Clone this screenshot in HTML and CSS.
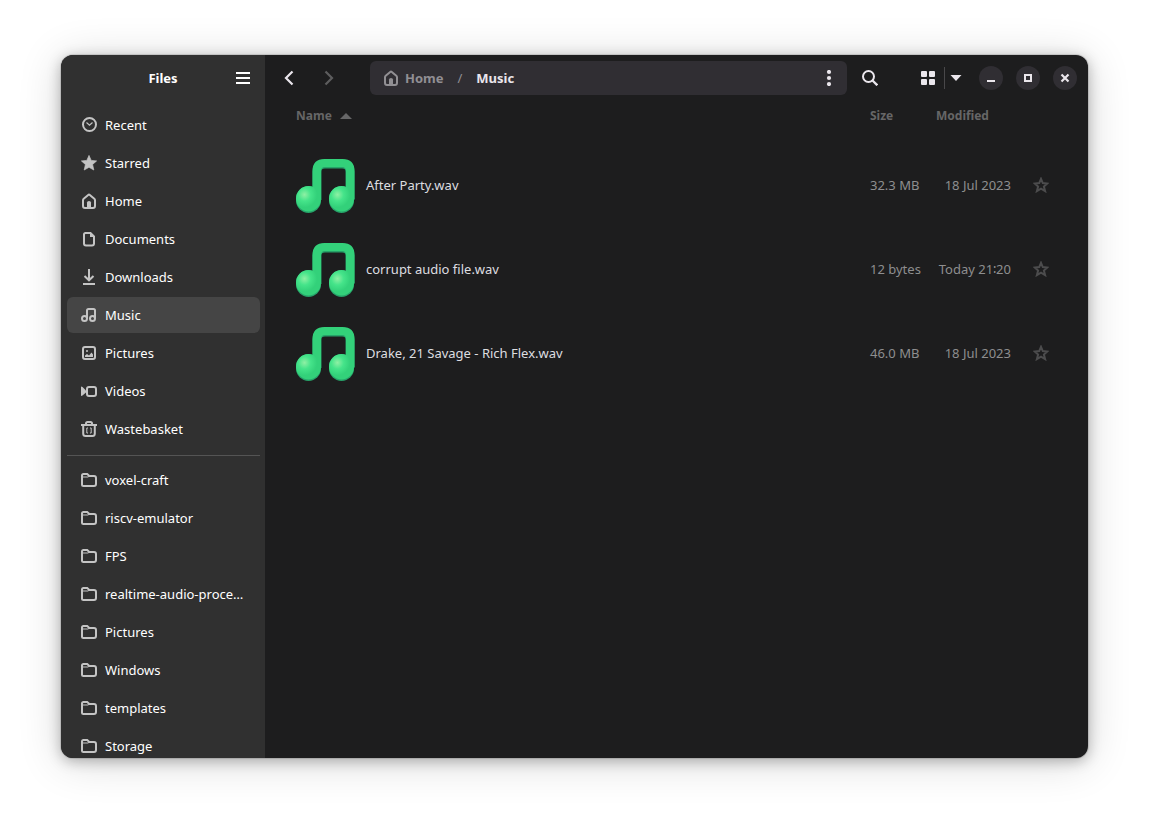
FILE: index.html
```html
<!DOCTYPE html>
<html lang="en">
<head>
<meta charset="utf-8">
<title>Files</title>
<link rel="stylesheet" href="styles.css">
</head>
<body>
<svg class="defs" aria-hidden="true">
  <symbol id="recent" viewBox="0 0 16 16"><circle cx="8.500" cy="7.500" r="6.500" fill="none" stroke="currentColor" stroke-width="2"/><path d="M5.500 5.500 8.500 8.200 11.500 5.500" fill="none" stroke="currentColor" stroke-width="1.200"/></symbol>
  <symbol id="starred" viewBox="0 0 16 16"><path d="M8 .4 10.200 5.400 15.600 5.900 11.600 9.500 12.800 15 8 12.300 3.200 15 4.400 9.500 .4 5.900 5.800 5.400Z" fill="currentColor" stroke="currentColor" stroke-width=".7" stroke-linejoin="round"/></symbol>
  <symbol id="home" viewBox="0 0 16 16"><path d="M2 7.200Q2 6.300 2.700 5.700L7.200 1.900Q8 1.200 8.800 1.900L13.300 5.700Q14 6.300 14 7.200V13Q14 15 12 15H4Q2 15 2 13Z" fill="none" stroke="currentColor" stroke-width="2"/><path d="M6 15V9.500Q6 8 8 8T10 9.500V15Z" fill="currentColor"/></symbol>
  <symbol id="document" viewBox="0 0 16 16"><path d="M4.500 2H9.500L13 5.500V12.500Q13 14.500 11 14.500H5Q3 14.500 3 12.500V3.500Q3 2 4.500 2Z" fill="none" stroke="currentColor" stroke-width="2"/><path d="M9 1.500V6H13.500Z" fill="currentColor"/></symbol>
  <symbol id="download" viewBox="0 0 16 16"><path d="M8 0V11M3.500 7 8 11.300 12.500 7M2 15H14" fill="none" stroke="currentColor" stroke-width="2"/></symbol>
  <symbol id="music" viewBox="0 0 16 16"><g fill="none" stroke="currentColor" stroke-width="2"><circle cx="3.500" cy="11.500" r="2.500"/><circle cx="11.500" cy="11.500" r="2.500"/><path d="M6 11.500V3.500Q6 2 7.500 2H12.500Q14 2 14 3.500V11.500"/></g></symbol>
  <symbol id="picture" viewBox="0 0 16 16"><rect x="2" y="2" width="12" height="12" rx="2" fill="none" stroke="currentColor" stroke-width="2"/><path d="M4 12V10.500L6 9 8 10.500 10.500 7.500 12 9.500V12Z" fill="currentColor"/><circle cx="6" cy="6" r="1" fill="currentColor"/></symbol>
  <symbol id="video" viewBox="0 0 16 16"><rect x="6" y="4" width="9" height="9" rx="2" fill="none" stroke="currentColor" stroke-width="2"/><path d="M0 3.500V13L1.500 12.500 5 9.500V7.500L1.500 4Z" fill="currentColor"/></symbol>
  <symbol id="trash" viewBox="0 0 16 16"><path d="M0 4H16M5 4V2.500Q5 1 6.500 1H9.500Q11 1 11 2.500V4M2.200 5V12.500Q2.200 15 4.500 15H11.500Q13.800 15 13.800 12.500V5" fill="none" stroke="currentColor" stroke-width="2"/><path d="M7 7H5.800V12H7M9 7H10.200V12H9" fill="none" stroke="currentColor" stroke-width="1"/></symbol>
  <symbol id="folder" viewBox="0 0 16 16"><path d="M1 12.500V3.500Q1 2 2.500 2H6.200L8.300 4H13Q15 4 15 6V12Q15 14 13 14H2.500Q1 14 1 12.500Z" fill="none" stroke="currentColor" stroke-width="2"/><path d="M1.500 5H7L9 3.700" fill="none" stroke="currentColor" stroke-width="1"/></symbol>
  <symbol id="star" viewBox="0 0 16 16"><path d="M8 1.800 9.800 6.100 14.300 6.500 10.900 9.500 12.100 14.100 8 11.600 3.900 14.100 5.100 9.500 1.700 6.500 6.200 6.100Z" fill="none" stroke="currentColor" stroke-width="2"/></symbol>
  <symbol id="audio" viewBox="0 1 64 64">
    <path d="M24 48V20Q24 12 32 12H49Q57 12 57 20V48" fill="none" stroke="#26a269" stroke-width="9"/>
    <rect x="3" y="34" width="25" height="27" rx="12.500" fill="#26a269"/><rect x="36" y="34" width="25" height="27" rx="12.500" fill="#26a269"/>
    <path d="M19.500 47V19Q19.500 7 31.500 7H49.500Q61.500 7 61.500 19V47H53V19Q53 15 49 15H32Q28 15 28 19V47Z" fill="#33d17a"/>
    <rect x="3" y="34" width="25" height="25.500" rx="12.500" fill="url(#shine)"/><rect x="36" y="34" width="25" height="25.500" rx="12.500" fill="url(#shine)"/>
  </symbol>
  <radialGradient id="shine" cx=".34" cy=".34" r=".5"><stop offset="0" stop-color="#8ff0a4"/><stop offset=".5" stop-color="#45e48a"/><stop offset="1" stop-color="#33d17a"/></radialGradient>
</svg>

<div class="window">
  <aside class="sidebar">
    <header class="sidebar-header">
      <h1 class="title">Files</h1>
      <button class="icon-button" aria-label="Main menu"><svg class="icon" viewBox="0 0 16 16"><path d="M1 3H15M1 8H15M1 13H15" stroke="currentColor" stroke-width="2"/></svg></button>
    </header>
    <nav class="places">
      <a class="place" href="#"><svg class="icon"><use href="#recent"/></svg><span class="label">Recent</span></a>
      <a class="place" href="#"><svg class="icon"><use href="#starred"/></svg><span class="label">Starred</span></a>
      <a class="place" href="#"><svg class="icon"><use href="#home"/></svg><span class="label">Home</span></a>
      <a class="place" href="#"><svg class="icon"><use href="#document"/></svg><span class="label">Documents</span></a>
      <a class="place" href="#"><svg class="icon"><use href="#download"/></svg><span class="label">Downloads</span></a>
      <a class="place selected" href="#" aria-current="page"><svg class="icon"><use href="#music"/></svg><span class="label">Music</span></a>
      <a class="place" href="#"><svg class="icon"><use href="#picture"/></svg><span class="label">Pictures</span></a>
      <a class="place" href="#"><svg class="icon"><use href="#video"/></svg><span class="label">Videos</span></a>
      <a class="place" href="#"><svg class="icon"><use href="#trash"/></svg><span class="label">Wastebasket</span></a>
      <hr class="separator">
      <a class="place" href="#"><svg class="icon"><use href="#folder"/></svg><span class="label">voxel-craft</span></a>
      <a class="place" href="#"><svg class="icon"><use href="#folder"/></svg><span class="label">riscv-emulator</span></a>
      <a class="place" href="#"><svg class="icon"><use href="#folder"/></svg><span class="label">FPS</span></a>
      <a class="place" href="#"><svg class="icon"><use href="#folder"/></svg><span class="label">realtime-audio-proce…</span></a>
      <a class="place" href="#"><svg class="icon"><use href="#folder"/></svg><span class="label">Pictures</span></a>
      <a class="place" href="#"><svg class="icon"><use href="#folder"/></svg><span class="label">Windows</span></a>
      <a class="place" href="#"><svg class="icon"><use href="#folder"/></svg><span class="label">templates</span></a>
      <a class="place" href="#"><svg class="icon"><use href="#folder"/></svg><span class="label">Storage</span></a>
    </nav>
  </aside>

  <main class="main">
    <header class="toolbar">
      <div class="history">
        <button class="icon-button" aria-label="Back"><svg class="icon" viewBox="0 0 16 16"><path d="M11.500 1.500 5 8 11.500 14.500" fill="none" stroke="currentColor" stroke-width="2.200"/></svg></button>
        <button class="icon-button" aria-label="Forward" disabled><svg class="icon" viewBox="0 0 16 16"><path d="M4.500 1.500 11 8 4.500 14.500" fill="none" stroke="currentColor" stroke-width="2.200"/></svg></button>
      </div>
      <div class="pathbar">
        <a class="crumb" href="#"><svg class="icon"><use href="#home"/></svg>Home</a>
        <span class="slash">/</span>
        <a class="crumb current" href="#">Music</a>
        <button class="icon-button path-menu" aria-label="Folder menu"><svg class="icon" viewBox="0 0 16 16"><g fill="currentColor"><circle cx="8" cy="2" r="2.100"/><circle cx="8" cy="8" r="2.100"/><circle cx="8" cy="14" r="2.100"/></g></svg></button>
      </div>
      <button class="icon-button search" aria-label="Search"><svg class="icon" viewBox="0 0 16 16"><circle cx="6.500" cy="6.500" r="5.500" fill="none" stroke="currentColor" stroke-width="2"/><path d="M10.500 10.500 15.300 15.300" stroke="currentColor" stroke-width="2.300"/></svg></button>
      <div class="view-switch">
        <button class="icon-button view-mode" aria-label="Grid view"><svg class="icon" viewBox="0 0 16 16"><g fill="currentColor"><rect x="1" y="1" width="6" height="6" rx="1"/><rect x="9" y="1" width="6" height="6" rx="1"/><rect x="1" y="9" width="6" height="6" rx="1"/><rect x="9" y="9" width="6" height="6" rx="1"/></g></svg></button>
        <button class="icon-button view-options" aria-label="View options"><svg class="icon" viewBox="0 0 16 16"><path d="M2.500 5H13.500L8 11Z" fill="currentColor"/></svg></button>
      </div>
      <div class="window-controls">
        <button class="control" aria-label="Minimise"><svg class="icon" viewBox="0 0 16 16"><path d="M4 11H12" stroke="currentColor" stroke-width="2"/></svg></button>
        <button class="control" aria-label="Maximise"><svg class="icon" viewBox="0 0 16 16"><rect x="5" y="5" width="6" height="6" fill="none" stroke="currentColor" stroke-width="2"/></svg></button>
        <button class="control" aria-label="Close"><svg class="icon" viewBox="0 0 16 16"><path d="M4.500 4.500 11.500 11.500M11.500 4.500 4.500 11.500" stroke="currentColor" stroke-width="2.200"/></svg></button>
      </div>
    </header>

    <table class="files">
      <thead>
        <tr>
          <th class="name" aria-sort="ascending">Name <svg class="sort" viewBox="0 0 12 6"><path d="M0 6H12L6 0Z" fill="currentColor"/></svg></th>
          <th class="size">Size</th>
          <th class="modified">Modified</th>
          <th class="favourite" aria-label="Starred"></th>
        </tr>
      </thead>
      <tbody>
        <tr>
          <td class="name"><div class="file"><svg class="file-icon"><use href="#audio"/></svg>After Party.wav</div></td>
          <td class="size">32.3 MB</td>
          <td class="modified">18 Jul 2023</td>
          <td class="favourite"><button class="star-button" aria-label="Star After Party.wav"><svg class="icon"><use href="#star"/></svg></button></td>
        </tr>
        <tr>
          <td class="name"><div class="file"><svg class="file-icon"><use href="#audio"/></svg>corrupt audio file.wav</div></td>
          <td class="size">12 bytes</td>
          <td class="modified">Today 21∶20</td>
          <td class="favourite"><button class="star-button" aria-label="Star corrupt audio file.wav"><svg class="icon"><use href="#star"/></svg></button></td>
        </tr>
        <tr>
          <td class="name"><div class="file"><svg class="file-icon"><use href="#audio"/></svg>Drake, 21 Savage - Rich Flex.wav</div></td>
          <td class="size">46.0 MB</td>
          <td class="modified">18 Jul 2023</td>
          <td class="favourite"><button class="star-button" aria-label="Star Drake, 21 Savage - Rich Flex.wav"><svg class="icon"><use href="#star"/></svg></button></td>
        </tr>
      </tbody>
    </table>
  </main>
</div>
</body>
</html>
```
FILE: styles.css
```css
* {
  box-sizing: border-box;
}

body {
  display: flex;
  height: 100vh;
  margin: 0;
  padding: 55px 61px 67px;
  background: #fff;
  font: 13px/18px "Noto Sans", sans-serif;
  color: #fff;
}

a {
  color: inherit;
  text-decoration: none;
}

button {
  display: grid;
  place-items: center;
  flex: none;
  margin: 0;
  padding: 0;
  border: 0;
  background: none;
  color: inherit;
}

.defs {
  position: absolute;
  width: 0;
  height: 0;
}

.icon {
  display: block;
  flex: none;
  width: 16px;
  height: 16px;
}

.icon-button {
  width: 34px;
  height: 34px;
}

.window {
  display: flex;
  flex: 1;
  min-width: 0;
  overflow: hidden;
  border-radius: 12px;
  background: #1d1d1e;
  box-shadow: 0 0 0 1px rgba(0, 0, 0, 0.1), 0 3px 14px rgba(0, 0, 0, 0.28), 0 4px 44px rgba(0, 0, 0, 0.16);
}

.sidebar {
  display: flex;
  flex-direction: column;
  flex: none;
  width: 204px;
  background: #303030;
}

.sidebar-header {
  display: grid;
  grid-template-columns: 34px 1fr 34px;
  align-items: center;
  flex: none;
  height: 46px;
  padding: 0 5px;
}

.title {
  grid-column: 2;
  margin: 0;
  font-size: 13px;
  text-align: center;
}

.places {
  display: flex;
  flex-direction: column;
  flex: 1;
  gap: 2px;
  min-height: 0;
  overflow: hidden;
  padding: 6px 5px 0 6px;
}

.place {
  display: flex;
  align-items: center;
  flex: none;
  gap: 8px;
  height: 36px;
  padding: 0 14px;
  border-radius: 6px;
}

.place .icon {
  color: #c4c4c4;
}

.label {
  white-space: nowrap;
}

.selected {
  background: #454545;
}

.separator {
  flex: none;
  width: 100%;
  height: 1px;
  margin: 6px 0 4px;
  border: 0;
  background: #545454;
}

.main {
  flex: 1;
  min-width: 0;
}

.toolbar {
  display: flex;
  align-items: center;
  height: 46px;
  padding: 0 11px 0 7px;
  color: #eae6ec;
}

.history {
  display: flex;
  gap: 6px;
  margin-right: 24px;
}

.history :disabled {
  color: #5d5d5e;
}

.pathbar {
  display: flex;
  align-items: center;
  flex: 1;
  gap: 14px;
  height: 34px;
  padding: 0 1px 0 13px;
  border-radius: 6px;
  background: #302e33;
  font-weight: 700;
}

.crumb {
  display: flex;
  align-items: center;
  gap: 6px;
  color: #918f93;
}

.current {
  color: #eae6ec;
}

.slash {
  color: #918f93;
  font-weight: 400;
}

.path-menu {
  margin-left: auto;
}

.search {
  margin: 0 25px 0 6px;
}

.view-switch {
  display: flex;
  align-items: center;
  margin-right: 13px;
}

.view-mode {
  width: 32px;
}

.view-options {
  width: 22px;
  height: 22px;
  border-left: 1px solid #49484a;
}

.window-controls {
  display: flex;
  gap: 13px;
}

.control {
  width: 24px;
  height: 24px;
  border-radius: 50%;
  background: #302e33;
}

.files {
  width: 100%;
  table-layout: fixed;
  border-collapse: collapse;
  color: #8e8e8f;
}

.files th,
.files td {
  padding: 0;
  text-align: left;
  white-space: nowrap;
}

.files th {
  height: 30px;
  color: #666667;
  font-size: 12px;
}

.files thead::after {
  display: table-row;
  height: 12px;
  content: "";
}

.files td {
  height: 84px;
}

.files .name {
  padding-left: 31px;
}

.files .size {
  width: 66px;
}

.files .modified {
  width: 75px;
}

.files td.modified {
  text-align: right;
}

.files .favourite {
  width: 77px;
  padding-left: 13px;
}

.sort {
  width: 12px;
  height: 6px;
  margin-left: 5px;
  vertical-align: 1px;
}

.file {
  display: flex;
  align-items: center;
  gap: 9px;
  margin-left: -3px;
  color: #dddde0;
}

.file-icon {
  flex: none;
  width: 64px;
  height: 64px;
}

.star-button {
  width: 34px;
  height: 34px;
  color: #4c4c4d;
}
```
